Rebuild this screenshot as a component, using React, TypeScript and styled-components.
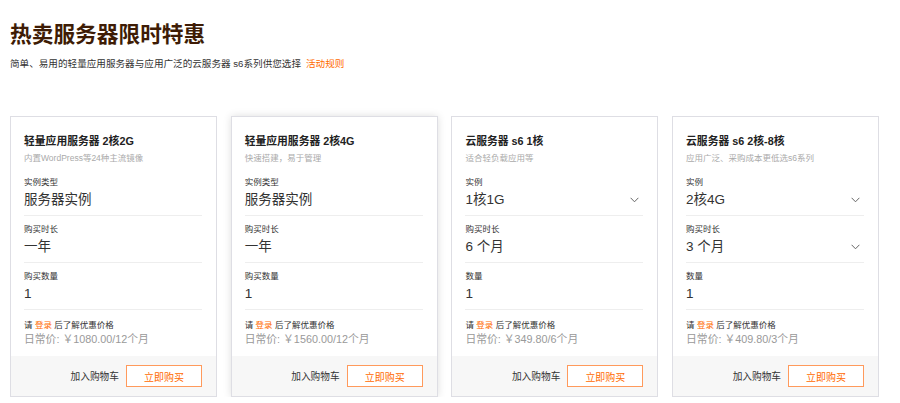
import React from "react";
import styled, { createGlobalStyle, css } from "styled-components";

const Global = createGlobalStyle`
  html, body { margin: 0; padding: 0; background: #fff; }
  body { font-family: "Liberation Sans", "Noto Sans CJK SC", sans-serif; color: #333; }
  * { box-sizing: border-box; }
`;

const Page = styled.div`
  padding: 19px 10px 0 10px;
  width: 900px;
`;

const Title = styled.h1`
  margin: 0;
  font-size: 21.7px;
  line-height: 28px;
  font-weight: 700;
  color: #3e1c05;
  font-family: "Noto Sans CJK SC", sans-serif;
`;

const Sub = styled.p`
  margin: 10px 0 0 0;
  font-size: 9.6px;
  line-height: 14px;
  color: #333;
`;

const RuleLink = styled.a`
  color: #ff6a00;
  margin-left: 5px;
  text-decoration: none;
`;

const Grid = styled.div`
  display: grid;
  grid-template-columns: repeat(4, 207px);
  column-gap: 13.7px;
  margin-top: 45px;
`;

const Card = styled.div<{ $active?: boolean }>`
  border: 1px solid #dedee4;
  background: #fff;
  display: flex;
  flex-direction: column;
  height: 281px;
  ${(p) =>
    p.$active &&
    css`
      box-shadow: 0 0 8px rgba(0, 0, 0, 0.13);
    `}
`;

const Body = styled.div`
  padding: 17px 14px 0 13px;
  flex: 1;
`;

const CardTitle = styled.div`
  font-size: 10.8px;
  line-height: 14px;
  font-weight: 700;
  color: #222;
`;

const Desc = styled.div`
  margin-top: 4px;
  font-size: 8.5px;
  line-height: 12px;
  color: #aaa;
`;

const Field = styled.div<{ $first?: boolean }>`
  padding: ${(p) => (p.$first ? "12px" : "7px")} 0 4px 0;
  border-bottom: 1px solid #eeeeee;
`;

const Label = styled.div`
  font-size: 8.5px;
  line-height: 12px;
  color: #333;
`;

const ValueRow = styled.div`
  margin-top: 1px;
  display: flex;
  align-items: center;
  justify-content: space-between;
  height: 22px;
  padding-right: 4px;
`;

const Value = styled.span`
  font-size: 13.5px;
  line-height: 22px;
  color: #333;
`;

const Chevron = styled.svg`
  width: 9px;
  height: 6px;
  display: block;
`;

const PriceBlock = styled.div`
  padding: 9px 0 6px 0;
`;

const LoginLine = styled.div`
  font-size: 8.5px;
  line-height: 12px;
  color: #333;
`;

const LoginLink = styled.a`
  color: #ff6a00;
  text-decoration: none;
`;

const Price = styled.div`
  font-size: 10.8px;
  line-height: 16px;
  color: #999;
`;

const Footer = styled.div`
  height: 40px;
  background: #f7f7f7;
  display: flex;
  align-items: center;
  justify-content: flex-end;
  padding-right: 14px;
  gap: 7px;
`;

const CartBtn = styled.span`
  font-size: 9.7px;
  color: #333;
`;

const BuyBtn = styled.button`
  width: 76px;
  height: 22px;
  border: 1px solid #ff9a5c;
  background: #fff;
  color: #ff6a00;
  font-size: 10px;
  font-family: "Liberation Sans", "Noto Sans CJK SC", sans-serif;
  padding: 0;
  cursor: pointer;
`;

type FieldData = { label: string; value: string; dropdown?: boolean };
type CardData = {
  title: string;
  desc: string;
  fields: FieldData[];
  price: string;
  active?: boolean;
};

const cards: CardData[] = [
  {
    title: "轻量应用服务器 2核2G",
    desc: "内置WordPress等24种主流镜像",
    fields: [
      { label: "实例类型", value: "服务器实例" },
      { label: "购买时长", value: "一年" },
      { label: "购买数量", value: "1" },
    ],
    price: "日常价: ￥1080.00/12个月",
  },
  {
    title: "轻量应用服务器 2核4G",
    desc: "快速搭建，易于管理",
    fields: [
      { label: "实例类型", value: "服务器实例" },
      { label: "购买时长", value: "一年" },
      { label: "购买数量", value: "1" },
    ],
    price: "日常价: ￥1560.00/12个月",
    active: true,
  },
  {
    title: "云服务器 s6 1核",
    desc: "适合轻负载应用等",
    fields: [
      { label: "实例", value: "1核1G", dropdown: true },
      { label: "购买时长", value: "6 个月" },
      { label: "数量", value: "1" },
    ],
    price: "日常价: ￥349.80/6个月",
  },
  {
    title: "云服务器 s6 2核-8核",
    desc: "应用广泛、采购成本更低选s6系列",
    fields: [
      { label: "实例", value: "2核4G", dropdown: true },
      { label: "购买时长", value: "3 个月", dropdown: true },
      { label: "数量", value: "1" },
    ],
    price: "日常价: ￥409.80/3个月",
  },
];

const ChevronIcon = () => (
  <Chevron viewBox="0 0 9 6">
    <path d="M0.6 0.8 L4.5 4.8 L8.4 0.8" fill="none" stroke="#666" strokeWidth="1" />
  </Chevron>
);

export default function App() {
  return (
    <>
      <Global />
      <Page>
        <Title>热卖服务器限时特惠</Title>
        <Sub>
          简单、易用的轻量应用服务器与应用广泛的云服务器 s6系列供您选择
          <RuleLink href="#">活动规则</RuleLink>
        </Sub>
        <Grid>
          {cards.map((c, i) => (
            <Card key={i} $active={c.active}>
              <Body>
                <CardTitle>{c.title}</CardTitle>
                <Desc>{c.desc}</Desc>
                {c.fields.map((f, j) => (
                  <Field key={j} $first={j === 0}>
                    <Label>{f.label}</Label>
                    <ValueRow>
                      <Value>{f.value}</Value>
                      {f.dropdown && <ChevronIcon />}
                    </ValueRow>
                  </Field>
                ))}
                <PriceBlock>
                  <LoginLine>
                    请 <LoginLink href="#">登录</LoginLink> 后了解优惠价格
                  </LoginLine>
                  <Price>{c.price}</Price>
                </PriceBlock>
              </Body>
              <Footer>
                <CartBtn>加入购物车</CartBtn>
                <BuyBtn>立即购买</BuyBtn>
              </Footer>
            </Card>
          ))}
        </Grid>
      </Page>
    </>
  );
}
